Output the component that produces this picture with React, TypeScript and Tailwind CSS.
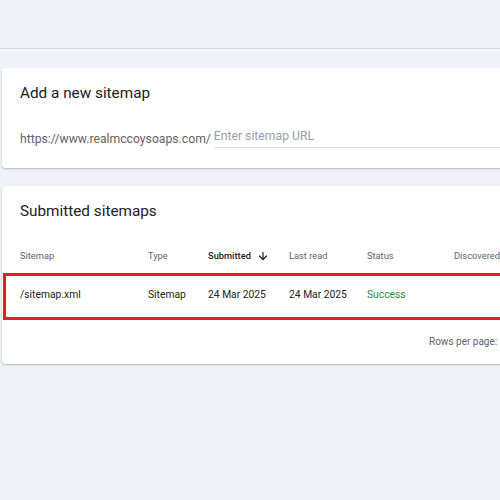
import { ArrowDown } from "lucide-react";

const cols = "grid grid-cols-[128px_60px_81px_78px_87px_100px]";

export default function App() {
    return (
        <div className="h-[500px] w-[500px] overflow-hidden bg-[#eff2f7] font-['Roboto',sans-serif]">
            <div className="h-[49px] border-b border-[#d5d9df]" />

            <div className="ml-[2px] mt-[19px] flex w-[540px] flex-col gap-[18px]">
                {/* Add a new sitemap */}
                <section className="h-[100px] rounded-sm bg-white pl-[18px] pt-[15px] shadow-[0_1px_2px_rgba(60,64,67,0.35)]">
                    <h2 className="text-[15.3px] leading-5 text-[#202124]">Add a new sitemap</h2>
                    <div className="mt-[24px] flex items-end">
                        <span className="text-[12.2px] text-[#5f6368]">https://www.realmccoysoaps.com/</span>
                        <input
                            placeholder="Enter sitemap URL"
                            className="ml-[3px] w-[320px] border-b border-[#dadce0] pb-[2px] text-[12.2px] text-[#202124] placeholder:text-[#9aa0a6] outline-none"
                        />
                    </div>
                </section>

                {/* Submitted sitemaps */}
                <section className="h-[178px] rounded-sm bg-white pt-[15px] shadow-[0_1px_2px_rgba(60,64,67,0.35)]">
                    <h2 className="pl-[18px] text-[15.3px] leading-5 text-[#202124]">Submitted sitemaps</h2>

                    <div className={`${cols} mt-[22px] h-[25px] items-center pl-[18px] text-[9.3px] text-[#5f6368]`}>
                        <span>Sitemap</span>
                        <span>Type</span>
                        <span className="flex items-center gap-[6px] font-medium text-[#202124]">
                            Submitted
                            <ArrowDown className="h-[12px] w-[12px]" strokeWidth={2.4} />
                        </span>
                        <span>Last read</span>
                        <span>Status</span>
                        <span>Discovered</span>
                    </div>

                    <div className={`${cols} ml-[1px] mt-[5px] h-[47px] items-center border-[3px] border-[#e01f26] pb-[4px] pl-[14px] text-[10.3px] text-[#202124]`}>
                        <span>/sitemap.xml</span>
                        <span>Sitemap</span>
                        <span>24 Mar 2025</span>
                        <span>24 Mar 2025</span>
                        <span className="text-[#1e8e3e]">Success</span>
                        <span />
                    </div>

                    <div className="mt-[14px] pl-[427px] text-[10px] text-[#5f6368]">Rows per page:</div>
                </section>
            </div>
        </div>
    );
}
